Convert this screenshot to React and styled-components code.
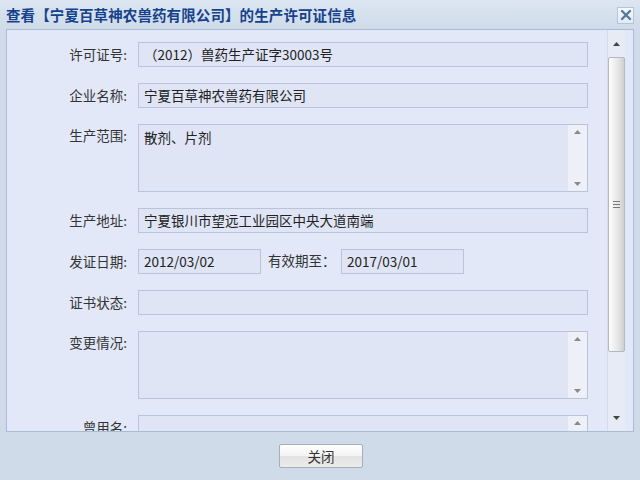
import React from 'react';
import styled, { createGlobalStyle } from 'styled-components';

const GlobalStyle = createGlobalStyle`
  body {
    margin: 0;
    font-family: "Noto Sans CJK SC", "Liberation Sans", sans-serif;
  }
`;

const Window = styled.div`
  width: 640px;
  height: 480px;
  display: flex;
  flex-direction: column;
  background: #cfdbe9;
  overflow: hidden;
`;

const TitleBar = styled.div`
  height: 29px;
  flex: none;
  display: flex;
  align-items: center;
  justify-content: space-between;
  padding: 0 6px 0 6px;
  background: linear-gradient(#dce6f2, #cfdbe9);
`;

const Title = styled.div`
  font-size: 14.5px;
  font-weight: bold;
  color: #15428b;
  letter-spacing: 0.1px;
`;

const CloseButton = styled.div`
  width: 15px;
  height: 15px;
  border: 1px solid #b3c5dc;
  background: linear-gradient(#f6f9fc, #e3eaf3);
  display: flex;
  align-items: center;
  justify-content: center;
  margin-top: 1px;
`;

const Panel = styled.div`
  height: 401px;
  margin: 0 6px 0 6px;
  border: 1px solid #a7bcd6;
  background: #e2e8f8;
  display: flex;
  overflow: hidden;
  flex: none;
`;

const Content = styled.div`
  flex: 1;
  padding: 12px 19px 0 0;
  display: grid;
  grid-template-columns: 120px 1fr;
  column-gap: 11px;
  row-gap: 16px;
  align-content: start;
`;

const Label = styled.div`
  font-size: 13.5px;
  color: #333;
  text-align: right;
  line-height: ${(p) => (p.$top ? '22px' : '25px')};
  align-self: start;
  white-space: nowrap;
`;

const Field = styled.div`
  box-sizing: border-box;
  height: 25px;
  width: ${(p) => p.$width || 'auto'};
  border: 1px solid #b9c4d8;
  background: #dfe5f5;
  padding: 0 5px;
  font-size: 13.5px;
  line-height: 23px;
  color: #222;
  white-space: nowrap;
  overflow: hidden;
`;

const Area = styled.div`
  box-sizing: border-box;
  height: 68px;
  border: 1px solid #b9c4d8;
  background: #dfe5f5;
  display: flex;
`;

const AreaText = styled.div`
  flex: 1;
  padding: 2px 5px;
  font-size: 13.5px;
  line-height: 20px;
  color: #222;
`;

const AreaScroll = styled.div`
  width: 19px;
  background: #edf0f7;
  display: flex;
  flex-direction: column;
  justify-content: space-between;
  align-items: center;
  padding: 5px 0;
`;

const DateRow = styled.div`
  display: flex;
  align-items: flex-start;
`;

const MidLabel = styled.div`
  font-size: 13.5px;
  color: #333;
  line-height: 22px;
  width: 80px;
  padding-left: 7px;
  box-sizing: border-box;
`;

const ScrollBar = styled.div`
  width: 17px;
  margin-right: 8px;
  flex: none;
  display: flex;
  flex-direction: column;
  align-items: center;
  background: #e6ebf5;
  border-left: 1px solid #d6dce6;
`;

const ArrowBox = styled.div`
  height: 27px;
  display: flex;
  align-items: center;
  justify-content: center;
`;

const Thumb = styled.div`
  box-sizing: border-box;
  width: 17px;
  height: 295px;
  border: 1px solid #b4b8c0;
  border-radius: 2px;
  background: linear-gradient(to right, #fdfdfd, #e6e6e6 60%, #cfcfcf);
  display: flex;
  flex-direction: column;
  align-items: center;
  justify-content: center;
  gap: 2px;
`;

const Grip = styled.div`
  width: 7px;
  height: 1px;
  background: #7a7a7a;
`;

const Spacer = styled.div`
  flex: 1;
`;

const Footer = styled.div`
  flex: 1;
  display: flex;
  align-items: center;
  justify-content: center;
  padding-left: 2px;
`;

const Button = styled.div`
  box-sizing: border-box;
  width: 84px;
  height: 24px;
  border: 1px solid #a8aeb6;
  border-radius: 2px;
  background: linear-gradient(#ffffff, #f3f3f3 50%, #e2e2e2 52%, #ececec);
  font-size: 13.5px;
  color: #333;
  display: flex;
  align-items: center;
  justify-content: center;
`;

const Arrow = ({ up, size = 7, color = '#555' }) => (
  <svg width={size} height={4} viewBox="0 0 7 4">
    <path d={up ? 'M0 4 L3.5 0 L7 4 Z' : 'M0 0 L3.5 4 L7 0 Z'} fill={color} />
  </svg>
);

const TextArea = ({ children }) => (
  <Area>
    <AreaText>{children}</AreaText>
    <AreaScroll>
      <Arrow up size={7} color="#888" />
      <Arrow size={7} color="#888" />
    </AreaScroll>
  </Area>
);

const App = () => {
  return (
    <Window>
      <GlobalStyle />
      <TitleBar>
        <Title>查看【宁夏百草神农兽药有限公司】的生产许可证信息</Title>
        <CloseButton>
          <svg width="12" height="12" viewBox="0 0 12 12">
            <path d="M2 2 L10 10 M10 2 L2 10" stroke="#56779f" strokeWidth="2.4" strokeLinecap="round" />
          </svg>
        </CloseButton>
      </TitleBar>
      <Panel>
        <Content>
          <Label>许可证号:</Label>
          <Field>（2012）兽药生产证字30003号</Field>

          <Label>企业名称:</Label>
          <Field>宁夏百草神农兽药有限公司</Field>

          <Label $top>生产范围:</Label>
          <TextArea>散剂、片剂</TextArea>

          <Label>生产地址:</Label>
          <Field>宁夏银川市望远工业园区中央大道南端</Field>

          <Label>发证日期:</Label>
          <DateRow>
            <Field $width="123px">2012/03/02</Field>
            <MidLabel>有效期至：</MidLabel>
            <Field $width="123px">2017/03/01</Field>
          </DateRow>

          <Label>证书状态:</Label>
          <Field />

          <Label $top>变更情况:</Label>
          <TextArea />

          <Label>曾用名:</Label>
          <TextArea />
        </Content>
        <ScrollBar>
          <ArrowBox>
            <Arrow up color="#444" />
          </ArrowBox>
          <Thumb>
            <Grip />
            <Grip />
            <Grip />
          </Thumb>
          <Spacer />
          <ArrowBox>
            <Arrow color="#444" />
          </ArrowBox>
        </ScrollBar>
      </Panel>
      <Footer>
        <Button>关闭</Button>
      </Footer>
    </Window>
  );
};

export default App;
